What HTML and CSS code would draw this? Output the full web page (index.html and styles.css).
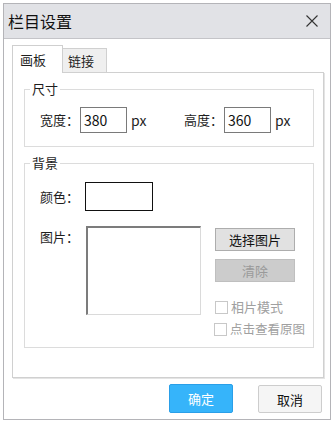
FILE: index.html
```html
<!DOCTYPE html>
<html lang="zh-CN">

<head>
  <meta charset="UTF-8" />
  <meta name="viewport" content="width=device-width, initial-scale=1.0" />
  <title>栏目设置</title>
  <link rel="stylesheet" href="styles.css">
</head>

<body>
  <div class="dialog">
    <!-- Title bar -->
    <div class="titlebar">
      <span class="title">栏目设置</span>
      <svg class="close" width="12" height="12" viewBox="0 0 12 12">
        <path d="M0.5 0.5 L11.5 11.5 M11.5 0.5 L0.5 11.5" stroke="#333" stroke-width="1.1" fill="none" />
      </svg>
    </div>

    <div class="content">
      <div class="tabs">
        <div class="tab active">画板</div>
        <div class="tab">链接</div>
      </div>

      <div class="panel">
        <fieldset class="group size-group">
          <legend>尺寸</legend>
          <div class="size-row">
            <div class="size-item">
              <label>宽度：</label>
              <input type="text" class="num" value="380" />
              <span class="unit">px</span>
            </div>
            <div class="size-item">
              <label>高度：</label>
              <input type="text" class="num" value="360" />
              <span class="unit">px</span>
            </div>
          </div>
        </fieldset>

        <fieldset class="group bg-group">
          <legend>背景</legend>
          <div class="bg-body">
            <div class="color-row">
              <label>颜色：</label>
              <div class="swatch"></div>
            </div>
            <div class="image-row">
              <label>图片：</label>
              <div class="image-box"></div>
              <div class="image-actions">
                <button class="btn">选择图片</button>
                <button class="btn disabled">清除</button>
                <div class="check first"><span class="box"></span>相片模式</div>
                <div class="check last"><span class="box"></span>点击查看原图</div>
              </div>
            </div>
          </div>
        </fieldset>
      </div>
    </div>

    <div class="footer">
      <button class="btn-ok">确定</button>
      <button class="btn-cancel">取消</button>
    </div>
  </div>
</body>

</html>
```

FILE: styles.css
```css
body {
  margin: 0;
  font-family: "Noto Sans CJK SC", "Noto Sans", sans-serif;
  font-size: 13px;
  color: #1e1e1e;
  background-color: #fff;
}

.dialog {
  margin: 3px;
  width: 328px;
  height: 417px;
  box-sizing: border-box;
  border: 1px solid #b4b4b8;
  display: flex;
  flex-direction: column;
}

.titlebar {
  height: 35px;
  box-sizing: border-box;
  background-color: #e1e2e6;
  border-bottom: 1px solid #c4c4c8;
  display: flex;
  align-items: center;
  justify-content: space-between;
  padding: 0 12px 0 4px;
}

.title {
  font-size: 16px;
  line-height: 20px;
  color: #111;
}

.content {
  padding: 6px 6px 0 8px;
}

.tabs {
  display: flex;
  align-items: flex-end;
  height: 27px;
}

.tab {
  box-sizing: border-box;
  line-height: 16px;
  display: flex;
  align-items: center;
}

.tab.active {
  width: 51px;
  height: 28px;
  margin-bottom: -1px;
  padding-left: 7px;
  background-color: #fff;
  border: 1px solid #cfcfcf;
  border-bottom: none;
  position: relative;
  z-index: 1;
}

.tab:not(.active) {
  width: 45px;
  height: 24px;
  margin-left: -1px;
  padding-left: 5px;
  padding-top: 1px;
  background-color: #efefef;
  border: 1px solid #d0d0d0;
  border-bottom: none;
}

.panel {
  width: 312px;
  height: 306px;
  box-sizing: border-box;
  border: 1px solid #d0d0d0;
  box-shadow: 1px 1px 0 #e4e4e4;
  padding: 0 9px 0 11px;
}

.group {
  margin: 0;
  width: 290px;
  box-sizing: border-box;
  border: 1px solid #dcdcdc;
  padding: 0;
  min-width: 0;
}

.group legend {
  margin-left: 5px;
  padding: 0 2px;
  line-height: 16px;
  font-size: 13px;
}

.size-group {
  margin-top: 8px;
}

.size-row {
  display: flex;
  padding: 10px 0 13px 15px;
}

.size-item {
  flex-shrink: 0;
  width: 144px;
  display: flex;
  align-items: center;
}

.size-item label {
  width: 40px;
  flex-shrink: 0;
  line-height: 16px;
}

.num {
  width: 47px;
  height: 26px;
  flex-shrink: 0;
  box-sizing: border-box;
  border: 1px solid #7a7a7a;
  padding: 0 0 0 3px;
  margin: 0;
  font-family: "Noto Sans CJK SC", "Noto Sans", sans-serif;
  font-size: 14px;
  color: #111;
  outline: none;
}

.unit {
  margin-left: 4px;
  font-size: 14px;
  line-height: 16px;
}

.bg-group {
  margin-top: 8px;
}

.bg-body {
  padding: 11px 0 10px 15px;
}

.color-row {
  display: flex;
  align-items: center;
}

.color-row label {
  width: 45px;
  line-height: 16px;
}

.swatch {
  width: 68px;
  height: 29px;
  box-sizing: border-box;
  border: 1px solid #111;
  background-color: #fff;
}

.image-row {
  display: flex;
  align-items: flex-start;
  margin-top: 15px;
}

.image-row label {
  width: 46px;
  line-height: 16px;
  padding-top: 3px;
}

.image-box {
  width: 115px;
  height: 89px;
  box-sizing: border-box;
  border-top: 2px solid #7c7c7c;
  border-left: 2px solid #7c7c7c;
  border-right: 1px solid #dadada;
  border-bottom: 1px solid #dadada;
}

.image-actions {
  margin-left: 14px;
  padding-top: 2px;
  display: flex;
  flex-direction: column;
}

.btn {
  width: 80px;
  height: 23px;
  box-sizing: border-box;
  margin: 0;
  padding: 0;
  border: 1px solid #adadad;
  background-color: #e1e1e1;
  font-family: "Noto Sans CJK SC", "Noto Sans", sans-serif;
  font-size: 13px;
  color: #111;
}

.btn.disabled {
  margin-top: 8px;
  border-color: #bfbfbf;
  background-color: #cccccc;
  color: #9a9a9a;
}

.check {
  display: flex;
  align-items: center;
  line-height: 16px;
  color: #a0a0a0;
  margin-top: 6px;
}

.check.first {
  margin-top: 17px;
}

.check.last {
  margin-left: -1px;
  font-size: 12.5px;
}

.check .box {
  width: 13px;
  height: 13px;
  box-sizing: border-box;
  border: 1px solid #c8c8c8;
  background-color: #fff;
  margin-right: 3px;
}

.footer {
  display: flex;
  justify-content: flex-end;
  align-items: flex-start;
  gap: 25px;
  padding: 6px 8px 0 0;
}

.btn-ok,
.btn-cancel {
  width: 64px;
  box-sizing: border-box;
  margin: 0;
  padding: 0;
  border-radius: 2px;
  font-family: "Noto Sans CJK SC", "Noto Sans", sans-serif;
  font-size: 13px;
}

.btn-ok {
  height: 29px;
  border: 1px solid #2a9fe8;
  background-color: #36b4fa;
  color: #fff;
}

.btn-cancel {
  height: 28px;
  margin-top: 1px;
  border: 1px solid #cdcdcd;
  background-color: #f5f5f5;
  color: #111;
}
```
